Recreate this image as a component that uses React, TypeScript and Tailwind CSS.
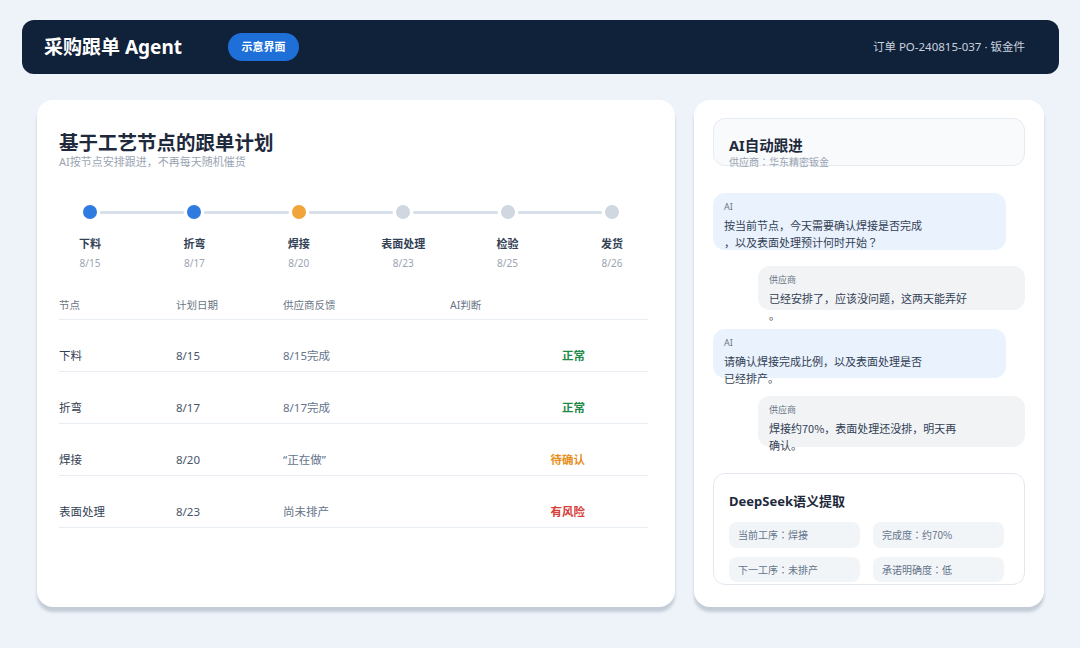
import React from 'react';

const steps = [
  { name: '下料', date: '8/15', color: 'bg-[#2f7be0]' },
  { name: '折弯', date: '8/17', color: 'bg-[#2f7be0]' },
  { name: '焊接', date: '8/20', color: 'bg-[#f0a43a]' },
  { name: '表面处理', date: '8/23', color: 'bg-[#d0d7e0]' },
  { name: '检验', date: '8/25', color: 'bg-[#d0d7e0]' },
  { name: '发货', date: '8/26', color: 'bg-[#d0d7e0]' },
];

const rows = [
  { node: '下料', plan: '8/15', feedback: '8/15完成', status: '正常', tone: 'text-[#1f8a4a]' },
  { node: '折弯', plan: '8/17', feedback: '8/17完成', status: '正常', tone: 'text-[#1f8a4a]' },
  { node: '焊接', plan: '8/20', feedback: '“正在做”', status: '待确认', tone: 'text-[#e5901c]' },
  { node: '表面处理', plan: '8/23', feedback: '尚未排产', status: '有风险', tone: 'text-[#d6403a]' },
];

const chips = ['当前工序：焊接', '完成度：约70%', '下一工序：未排产', '承诺明确度：低'];

// CJK punctuation (centered colon, full-width ？) as in the reference
const cjk = "font-['Noto_Sans_CJK_JP','Noto_Sans',sans-serif]";

function Bubble({
  who,
  lines,
  ai,
  height,
}: {
  who: string;
  lines: string[];
  ai?: boolean;
  height: string;
}) {
  return (
    <div
      className={`${height} rounded-[12px] pl-[11px] pt-[8px] ${
        ai ? 'bg-[#eaf2fd] w-[293px]' : 'bg-[#f1f3f5] w-[267px] self-end'
      }`}
    >
      <div className="text-[9px] leading-[12px] text-[#6b7585]">{who}</div>
      <div className={`mt-[4px] text-[11px] leading-[17px] text-[#334155] ${cjk}`}>
        {lines.map((l, i) => (
          <div key={i} className="whitespace-nowrap">
            {l}
          </div>
        ))}
      </div>
    </div>
  );
}

export default function App() {
  return (
    <div
      className="min-h-[648px] w-[1080px] bg-[#eef3f9] pt-[20px] pl-[22px] pr-[21px]"
      style={{ fontFamily: '"Noto Sans", "Noto Sans CJK SC", sans-serif' }}
    >
      {/* header */}
      <div className="flex h-[54px] items-center rounded-[12px] bg-[#10213a] pl-[22px] pr-[34px]">
        <div className="text-[19px] font-bold text-white">采购跟单 Agent</div>
        <div className="ml-[46px] flex h-[28px] w-[71px] items-center justify-center rounded-full bg-[#1f6fd8] text-[11px] font-bold text-white">
          示意界面
        </div>
        <div className="ml-auto text-[11.5px] text-[#c9d2de]">订单 PO-240815-037 · 钣金件</div>
      </div>

      <div className="mt-[26px] flex gap-[19px] px-[15px]">
        {/* left card */}
        <div className="h-[507px] w-[638px] rounded-[16px] bg-white px-[22px] pt-[31px] shadow-[0_5px_3px_rgba(100,116,139,0.3)]">
          <div className="text-[19.5px] font-bold leading-[24px] text-[#1e293b]">基于工艺节点的跟单计划</div>
          <div className="text-[11px] leading-[14px] text-[#9aa4b2]">AI按节点安排跟进，不再每天随机催货</div>

          <div className="mr-[10px]">
            <div className="mt-[36px] flex items-center px-[24px]">
              {steps.map((s, i) => (
                <React.Fragment key={s.name}>
                  {i > 0 && <div className="mx-[3px] h-[3px] flex-1 rounded-full bg-[#d7dfea]" />}
                  <div className={`h-[14px] w-[14px] shrink-0 rounded-full ${s.color}`} />
                </React.Fragment>
              ))}
            </div>
            <div className="mt-[16px] flex justify-between">
              {steps.map((s) => (
                <div key={s.name} className="flex w-[62px] flex-col items-center">
                  <div className="text-[11px] font-bold leading-[18px] text-[#334155]">{s.name}</div>
                  <div className="mt-[2px] text-[10px] leading-[16px] text-[#9aa4b2]">{s.date}</div>
                </div>
              ))}
            </div>
          </div>

          <div className="mt-[25px] w-[589px]">
            <div className="grid grid-cols-[117px_107px_167px_1fr] border-b border-[#e8edf3] pb-[5px] text-[10.5px] leading-[18px] text-[#6b7585]">
              <div>节点</div>
              <div>计划日期</div>
              <div>供应商反馈</div>
              <div>AI判断</div>
            </div>
            {rows.map((r) => (
              <div
                key={r.node}
                className="grid h-[52px] grid-cols-[117px_107px_167px_1fr] border-b border-[#e8edf3] pt-[27px] text-[11.5px] leading-[18px]"
              >
                <div className="text-[#334155]">{r.node}</div>
                <div className="text-[#475569]">{r.plan}</div>
                <div className="text-[#64748b]">{r.feedback}</div>
                <div className={`pr-[63px] text-right font-bold ${r.tone}`}>{r.status}</div>
              </div>
            ))}
          </div>
        </div>

        {/* right card */}
        <div className="flex h-[507px] w-[350px] flex-col rounded-[16px] bg-white px-[19px] pt-[18px] shadow-[0_5px_3px_rgba(100,116,139,0.3)]">
          <div className="h-[48px] rounded-[12px] border border-[#e6ebf1] bg-[#f8fafc] pl-[15px] pt-[16px]">
            <div className="text-[14.5px] font-bold leading-[20px] text-[#1e293b]">AI自动跟进</div>
            <div className={`text-[10px] leading-[14px] text-[#9aa4b2] ${cjk}`}>供应商：华东精密钣金</div>
          </div>

          <div className="mt-[27px] flex flex-col">
            <Bubble
              ai
              who="AI"
              height="h-[57px]"
              lines={['按当前节点，今天需要确认焊接是否完成', '，以及表面处理预计何时开始？']}
            />
            <div className="mt-[16px] flex flex-col">
              <Bubble who="供应商" height="h-[44px]" lines={['已经安排了，应该没问题，这两天能弄好', '。']} />
            </div>
            <div className="mt-[19px] flex flex-col">
              <Bubble ai who="AI" height="h-[49px]" lines={['请确认焊接完成比例，以及表面处理是否', '已经排产。']} />
            </div>
            <div className="mt-[18px] flex flex-col">
              <Bubble who="供应商" height="h-[51px]" lines={['焊接约70%，表面处理还没排，明天再', '确认。']} />
            </div>
          </div>

          <div className="mt-[26px] h-[112px] rounded-[12px] border border-[#e3e8ef] bg-white pl-[15px] pr-[20px] pt-[18px]">
            <div className="text-[13px] font-bold leading-[18px] text-[#1e293b]">DeepSeek语义提取</div>
            <div className="mt-[12px] grid grid-cols-2 gap-x-[13px] gap-y-[9px]">
              {chips.map((c) => (
                <div
                  key={c}
                  className={`flex h-[25.5px] items-center rounded-[8px] bg-[#f2f5f8] pl-[9px] text-[10px] text-[#64748b] ${cjk}`}
                >
                  {c}
                </div>
              ))}
            </div>
          </div>
        </div>
      </div>
    </div>
  );
}
